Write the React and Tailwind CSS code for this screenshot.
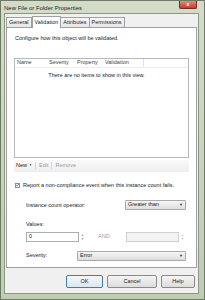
import React from 'react';

const font = { fontFamily: '"Liberation Sans", Arial, sans-serif' };

function Dropdown({ label, className }) {
  return (
    <div className={`flex items-center justify-between h-[10px] px-[2px] border border-[#a9a9a9] rounded-[1px] bg-gradient-to-b from-[#f6f6f6] to-[#dedede] ${className}`}>
      <span className="text-[5.5px] text-[#222] leading-none">{label}</span>
      <span className="text-[4px] text-[#333] leading-none">▼</span>
    </div>
  );
}

function Spinner({ disabled }) {
  return (
    <div className={`flex flex-col items-center justify-center w-[5px] h-[10px] ml-[1px] text-[3px] leading-[4px] ${disabled ? 'text-[#bbb]' : 'text-[#888]'}`}>
      <span>▲</span>
      <span>▼</span>
    </div>
  );
}

export default function App() {
  return (
    <div style={font} className="w-[205px] h-[300px] bg-gradient-to-b from-[#d3dcc9] to-[#bfcdb2] border border-[#6f7a66] flex flex-col overflow-hidden">
      {/* Title bar */}
      <div className="h-[12px] flex items-start justify-between pl-[3px] pr-[7px]">
        <span className="text-[6px] text-[#1e1e1e] mt-[4px] leading-none">New File or Folder Properties</span>
        <div className="w-[18px] h-[8px] rounded-b-[2px] bg-gradient-to-b from-[#e08b7c] to-[#c23b28] border border-[#7a2a1e] border-t-0 flex items-center justify-center">
          <span className="text-[5px] font-bold text-white leading-none">x</span>
        </div>
      </div>

      {/* Client area */}
      <div className="flex-1 ml-[3px] mr-[5px] mb-[5px] bg-[#f0f0f0] border border-[#8d9884] flex flex-col">
        {/* Tabs */}
        <div className="flex items-end pl-[1px] pt-[1px] h-[13px]">
          <div className="h-[10px] px-[2px] border border-[#a0a0a0] border-b-0 bg-gradient-to-b from-[#f7f7f7] to-[#e6e6e6] flex items-center text-[5.5px] text-[#222]">General</div>
          <div className="h-[12px] px-[2px] border border-[#a0a0a0] border-b-0 bg-white flex items-center text-[5.5px] text-[#222] -mb-[1px] relative z-10">Validation</div>
          <div className="h-[10px] px-[2px] border border-[#a0a0a0] border-b-0 border-l-0 bg-gradient-to-b from-[#f7f7f7] to-[#e6e6e6] flex items-center text-[5.5px] text-[#222]">Attributes</div>
          <div className="h-[10px] px-[2px] border border-[#a0a0a0] border-b-0 border-l-0 bg-gradient-to-b from-[#f7f7f7] to-[#e6e6e6] flex items-center text-[5.5px] text-[#222]">Permissions</div>
        </div>

        {/* Panel */}
        <div className="mx-[1px] h-[241px] bg-white border border-[#a0a0a0] flex flex-col px-[7px]">
          <p className="text-[5.5px] text-[#222] mt-[8px] ml-[1px] leading-none">Configure how this object will be validated.</p>

          {/* List view */}
          <div className="mt-[16px] h-[100px] border border-[#b8b8b8] flex flex-col">
            <div className="h-[9px] flex items-center text-[5.5px] text-[#444] border-b border-[#eee]">
              <span className="w-[34px] pl-[2px]">Name</span>
              <span className="w-[28px]">Severity</span>
              <span className="w-[28px]">Property</span>
              <span className="w-[39px] h-full flex items-center border-r border-[#e3e3e3]">Validation</span>
            </div>
            <p className="text-[5.5px] text-[#222] text-center mt-[5px] leading-none pr-[10px]">There are no items to show in this view.</p>
          </div>

          {/* Toolbar */}
          <div className="mt-[2px] h-[12px] bg-gradient-to-b from-[#fafafa] to-[#eeeeee] flex items-center text-[5.5px] px-[2px]">
            <span className="text-[#222]">New</span>
            <span className="text-[3px] text-[#444] ml-[2px]">▼</span>
            <span className="w-px h-[7px] bg-[#d6d6d6] mx-[3px]" />
            <span className="text-[#9a9a9a]">Edit</span>
            <span className="w-px h-[7px] bg-[#d6d6d6] mx-[3px]" />
            <span className="text-[#9a9a9a]">Remove</span>
          </div>

          {/* Checkbox */}
          <div className="mt-[11px] flex items-center">
            <div className="w-[5px] h-[5px] border border-[#8f8f8f] bg-[#f4f4f4] flex items-center justify-center ml-[1px]">
              <svg width="4" height="4" viewBox="0 0 4 4">
                <path d="M0.5 2 L1.6 3.2 L3.6 0.6" fill="none" stroke="#2d5d9e" strokeWidth="0.9" />
              </svg>
            </div>
            <span className="text-[5.5px] text-[#222] ml-[3px] leading-none">Report a non-compliance event when this instance count fails.</span>
          </div>

          {/* Operator */}
          <div className="mt-[12px] flex items-center pl-[12px]">
            <span className="text-[5.5px] text-[#222] w-[99px]">Instance count operator:</span>
            <Dropdown label="Greater than" className="w-[61px]" />
          </div>

          {/* Values */}
          <p className="text-[5.5px] text-[#222] mt-[12px] pl-[12px] leading-none">Values:</p>
          <div className="mt-[4px] flex items-center pl-[12px]">
            <div className="w-[53px] h-[10px] border border-[#abadb3] bg-white flex items-center px-[2px] text-[5.5px] text-[#222]">0</div>
            <Spinner />
            <span className="text-[5.5px] text-[#a0a0a0] ml-[13px] w-[28px]">AND</span>
            <div className="w-[53px] h-[10px] border border-[#cfcfcf] bg-[#f3f3f3]" />
            <Spinner disabled />
          </div>

          {/* Severity */}
          <div className="mt-[9px] flex items-center pl-[12px]">
            <span className="text-[5.5px] text-[#222] w-[51px]">Severity:</span>
            <Dropdown label="Error" className="w-[109px]" />
          </div>
        </div>

        {/* Buttons */}
        <div className="flex justify-end items-center gap-[4px] mt-[7px] pr-[3px]">
          <div className="w-[37px] h-[13px] rounded-[2px] border border-[#3c7fb1] bg-gradient-to-b from-[#f4f8fb] to-[#dde6ee] flex items-center justify-center text-[5.5px] text-[#222]">OK</div>
          <div className="w-[50px] h-[13px] rounded-[2px] border border-[#8a8a8a] bg-gradient-to-b from-[#f5f5f5] to-[#dcdcdc] flex items-center justify-center text-[5.5px] text-[#222]">Cancel</div>
          <div className="w-[34px] h-[13px] rounded-[2px] border border-[#8a8a8a] bg-gradient-to-b from-[#f5f5f5] to-[#dcdcdc] flex items-center justify-center text-[5.5px] text-[#222]">Help</div>
        </div>
      </div>
    </div>
  );
}
